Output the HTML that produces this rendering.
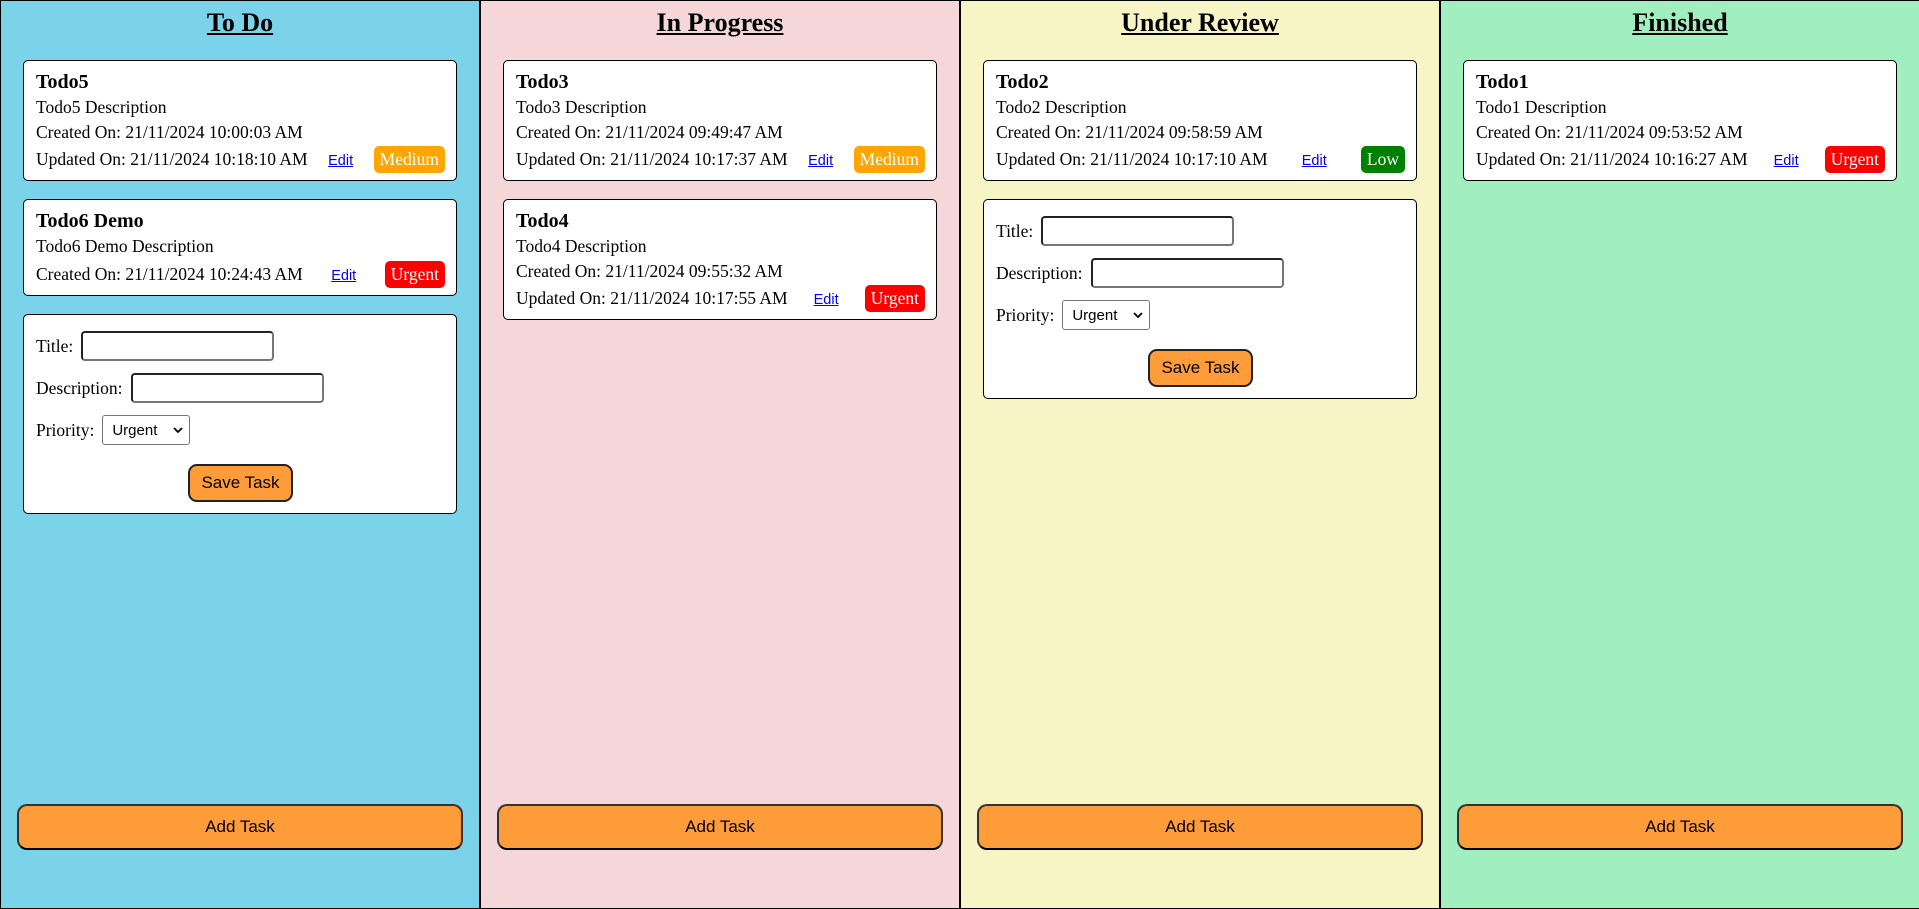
<!DOCTYPE html>
<html><head><meta charset="utf-8"><style>
*{box-sizing:border-box}
html,body{margin:0;padding:0;width:1919px;height:909px;overflow:hidden;font-family:"Liberation Serif",serif;color:#000}
.col{float:left;width:480px;height:909px;border:1px solid #000;position:relative}
.col:last-child{width:479px;border-right:none}
.h{height:59px;padding-top:7px;line-height:30px;font-size:26px;font-weight:bold;text-align:center}
.h span{text-decoration:underline}
.card{margin:0 22px 18px 22px;background:#fff;border:1px solid #000;border-radius:5px;padding:9px 11px 8px 12px;font-size:17.5px}
.t{font-size:20px;font-weight:bold;line-height:24px}
.d{line-height:26px}
.c{line-height:24px}
.row{display:flex;justify-content:space-between;align-items:center;height:28px;padding-top:2px}
.row a{font-family:"Liberation Sans",sans-serif;font-size:14.5px;color:#00e;text-decoration:underline;position:relative;top:2px}
.b{color:#fff;border-radius:5px;height:27px;line-height:26px;padding:0 6px;font-size:17.5px}
.m{background:#ffa500}.u{background:#f00}.l{background:#008000}
.form{padding:16px 11px 11px 12px}
.f{display:flex;align-items:center;height:30px;margin-bottom:12px}
.f label{margin-right:8px}
.in{width:193px;height:30px;border:2px solid #767676;border-top-color:#222;border-left-color:#222;border-radius:4px}
.sel{width:88px;height:30px;border:1px solid #767676;border-radius:3px;font-family:"Liberation Sans",sans-serif;font-size:15px;padding-left:9px;display:flex;align-items:center;justify-content:space-between;padding-right:6px}
.save{display:block;margin:19px auto 0;width:105px;height:38px;background:#ff9c3a;border:2px solid #222;border-radius:9px;font-family:"Liberation Sans",sans-serif;font-size:17px;line-height:34px;text-align:center}
.add{position:absolute;left:16px;right:16px;top:803px;height:46px;background:#ff9c3a;border:2px solid #333;border-bottom-color:#000;border-radius:10px;font-family:"Liberation Sans",sans-serif;font-size:17px;text-align:center;line-height:42px}
</style></head><body>

<div class="col" style="background:#7bd3e9">
<div class="h"><span>To Do</span></div>
<div class="card"><div class="t">Todo5</div><div class="d">Todo5 Description</div><div class="c">Created On: 21/11/2024 10:00:03 AM</div>
<div class="row"><span>Updated On: 21/11/2024 10:18:10 AM</span><a>Edit</a><span class="b m">Medium</span></div></div>
<div class="card"><div class="t">Todo6 Demo</div><div class="d">Todo6 Demo Description</div>
<div class="row"><span>Created On: 21/11/2024 10:24:43 AM</span><a>Edit</a><span class="b u">Urgent</span></div></div>
<div class="card form">
<div class="f"><label>Title:</label><div class="in"></div></div>
<div class="f"><label>Description:</label><div class="in"></div></div>
<div class="f"><label>Priority:</label><div class="sel"><span>Urgent</span><svg width="10" height="6" viewBox="0 0 10 6"><path d="M1 1l4 4 4-4" fill="none" stroke="#000" stroke-width="1.8"/></svg></div></div>
<div class="save">Save Task</div>
</div>
<div class="add">Add Task</div>
</div>

<div class="col" style="background:#f5d6d9">
<div class="h"><span>In Progress</span></div>
<div class="card"><div class="t">Todo3</div><div class="d">Todo3 Description</div><div class="c">Created On: 21/11/2024 09:49:47 AM</div>
<div class="row"><span>Updated On: 21/11/2024 10:17:37 AM</span><a>Edit</a><span class="b m">Medium</span></div></div>
<div class="card"><div class="t">Todo4</div><div class="d">Todo4 Description</div><div class="c">Created On: 21/11/2024 09:55:32 AM</div>
<div class="row"><span>Updated On: 21/11/2024 10:17:55 AM</span><a>Edit</a><span class="b u">Urgent</span></div></div>
<div class="add">Add Task</div>
</div>

<div class="col" style="background:#f7f5c6">
<div class="h"><span>Under Review</span></div>
<div class="card"><div class="t">Todo2</div><div class="d">Todo2 Description</div><div class="c">Created On: 21/11/2024 09:58:59 AM</div>
<div class="row"><span>Updated On: 21/11/2024 10:17:10 AM</span><a>Edit</a><span class="b l">Low</span></div></div>
<div class="card form">
<div class="f"><label>Title:</label><div class="in"></div></div>
<div class="f"><label>Description:</label><div class="in"></div></div>
<div class="f"><label>Priority:</label><div class="sel"><span>Urgent</span><svg width="10" height="6" viewBox="0 0 10 6"><path d="M1 1l4 4 4-4" fill="none" stroke="#000" stroke-width="1.8"/></svg></div></div>
<div class="save">Save Task</div>
</div>
<div class="add">Add Task</div>
</div>

<div class="col" style="background:#a1eebf">
<div class="h"><span>Finished</span></div>
<div class="card"><div class="t">Todo1</div><div class="d">Todo1 Description</div><div class="c">Created On: 21/11/2024 09:53:52 AM</div>
<div class="row"><span>Updated On: 21/11/2024 10:16:27 AM</span><a>Edit</a><span class="b u">Urgent</span></div></div>
<div class="add">Add Task</div>
</div>

</body></html>
